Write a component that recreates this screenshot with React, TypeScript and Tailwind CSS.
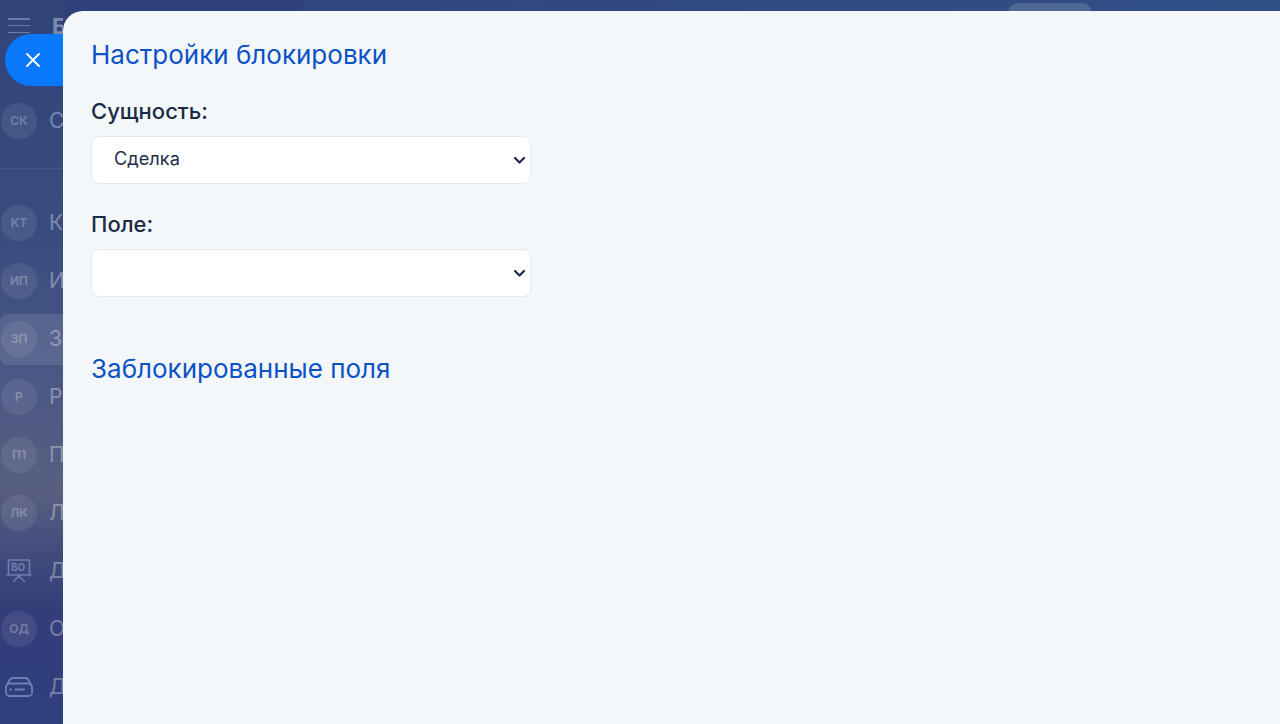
import React from "react";

type Row = { abbr?: string; icon?: "board" | "drive"; letter: string; active?: boolean };

const rows: Row[] = [
  { abbr: "КТ", letter: "Ко" },
  { abbr: "ИП", letter: "И" },
  { abbr: "ЗП", letter: "За", active: true },
  { abbr: "Р", letter: "Р" },
  { abbr: "П1", letter: "П" },
  { abbr: "ЛК", letter: "Л" },
  { icon: "board", letter: "Д" },
  { abbr: "ОД", letter: "О" },
  { icon: "drive", letter: "Д" },
];

function Board() {
  return (
    <svg width="26" height="24" viewBox="0 0 26 24" fill="none" stroke="currentColor" strokeWidth="1.6" strokeLinecap="round" strokeLinejoin="round">
      <path d="M2.500 1h21v15h-21zM1 16h24M13 17l-5.500 5.500M13 17l5.500 5.500" />
      <text x="5" y="12" fontSize="10" fontWeight="700" fill="currentColor" stroke="none" fontFamily="Inter, sans-serif">BO</text>
    </svg>
  );
}

function Drive() {
  return (
    <svg width="28" height="20" viewBox="0 0 28 20" fill="none" stroke="currentColor" strokeWidth="1.8" strokeLinecap="round" strokeLinejoin="round">
      <path d="M2 8 4.500 3Q5.500 1 8.500 1h11q3 0 4 2L26 8" />
      <rect x="1" y="6.500" width="26" height="12.500" rx="3.500" />
      <path d="M5 12.500h1M10.500 12.500h8.500" />
    </svg>
  );
}

function SideRow({ row }: { row: Row }) {
  return (
    <div className="flex h-[58px] shrink-0 items-center">
      <div
        className={`flex h-[51px] w-full items-center gap-3 whitespace-nowrap rounded-l-lg pl-px ${
          row.active ? "bg-white/10" : ""
        }`}
      >
        {row.abbr ? (
          <span className="flex h-9 w-9 shrink-0 items-center justify-center rounded-full bg-white/[0.08] text-[12px] font-bold text-white/25">
            {row.abbr}
          </span>
        ) : (
          <span className="flex h-9 w-9 shrink-0 items-center justify-center text-[#6f7eb0]">
            {row.icon === "board" ? <Board /> : <Drive />}
          </span>
        )}
        <span className="text-[21px] text-white/35">{row.letter}</span>
      </div>
    </div>
  );
}

function Field({ label, value }: { label: string; value: string }) {
  return (
    <div className="flex w-[440px] flex-col">
      <label className="mb-[10px] h-[29px] text-[22px] font-medium leading-[29px] text-[#1a2b44]">{label}</label>
      <div className="relative h-[48px] w-full">
        <select
          defaultValue={value}
          className="h-full w-full appearance-none rounded-lg border border-[#e5e9ef] bg-white pb-[2px] pl-[22px] text-[18.2px] text-[#1e2d48]"
        >
          <option value={value}>{value}</option>
        </select>
        <svg
          className="pointer-events-none absolute right-[5px] top-[20px]"
          width="13"
          height="9"
          viewBox="0 0 13 9"
          fill="none"
          stroke="#1a2b44"
          strokeWidth="2.200"
          strokeLinecap="round"
          strokeLinejoin="round"
        >
          <path d="M2 2 6.500 6.500 11 2" />
        </svg>
      </div>
    </div>
  );
}

export default function App() {
  return (
    <div className="relative flex h-[724px] w-[1280px] overflow-hidden bg-[linear-gradient(90deg,#2e4279_303px,#31487f_303px,#2f4f85_1280px)] font-['Inter',sans-serif]">
      <aside className="flex w-[63px] shrink-0 flex-col overflow-hidden bg-[linear-gradient(180deg,#30447a_0px,#3a4d80_240px,#4d5a85_400px,#585f80_490px,#3f4a7c_560px,#333d78_610px,#2f3f80_724px)]">
        <div className="flex h-[92px] shrink-0 items-start gap-[22px] whitespace-nowrap pl-[8px] pt-[18px]">
          <div className="flex h-[15px] w-[22px] shrink-0 flex-col justify-between">
            <span className="h-[1.500px] bg-white/30" />
            <span className="h-[1.500px] bg-white/30" />
            <span className="h-[1.500px] bg-white/30" />
          </div>
          <span className="text-[22px] font-bold leading-[16px] text-white/40">Б</span>
        </div>
        <div className="flex h-[58px] shrink-0 items-center gap-3 whitespace-nowrap pl-px">
          <span className="flex h-9 w-9 shrink-0 items-center justify-center rounded-full bg-white/[0.08] text-[12px] font-bold text-white/25">СК</span>
          <span className="text-[21px] text-white/35">С</span>
        </div>
        <div className="mt-[18px] h-px shrink-0 bg-white/[0.07]" />
        <div className="mt-[25px] flex shrink-0 flex-col">
          {rows.map((r, i) => (
            <SideRow key={i} row={r} />
          ))}
        </div>
      </aside>

      <div className="absolute left-[5px] top-[34px] flex h-[52px] w-[90px] items-center rounded-full bg-[#0a78fa] pl-[20px]">
        <svg width="16" height="16" viewBox="0 0 16 16" fill="none" stroke="white" strokeWidth="1.800" strokeLinecap="round">
          <path d="M2 2l12 12M14 2L2 14" />
        </svg>
      </div>

      <span className="absolute left-[1008px] top-[3px] h-5 w-[84px] rounded-[10px] bg-white/15" />

      <main className="relative z-10 mt-[11px] flex flex-1 flex-col items-start rounded-tl-[20px] bg-[#f4f7fa] pl-[28px] pt-[26px]">
        <h2 className="h-[36px] text-[26px] leading-[36px] text-[#0a52c6]">Настройки блокировки</h2>
        <div className="mt-[24px]">
          <Field label="Сущность:" value="Сделка" />
        </div>
        <div className="mt-[26px]">
          <Field label="Поле:" value="" />
        </div>
        <h2 className="mt-[54px] h-[36px] text-[26px] leading-[36px] text-[#0a52c6]">Заблокированные поля</h2>
      </main>
    </div>
  );
}
